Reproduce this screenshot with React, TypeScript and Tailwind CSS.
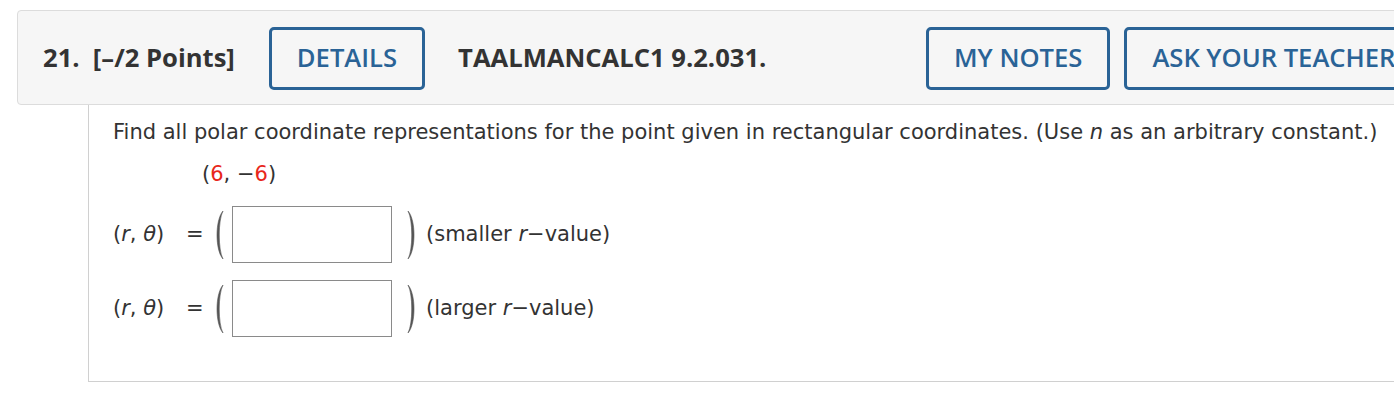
import React from "react";

const LParen = () => (
  <svg width="12" height="50" viewBox="0 0 12 50" className="shrink-0">
    <path d="M10 1 C2 10 2 40 10 49 C5 40 5 10 10 1 Z" fill="#555" stroke="#555" strokeWidth="0.6" />
  </svg>
);
const RParen = () => (
  <svg width="12" height="50" viewBox="0 0 12 50" className="shrink-0">
    <path d="M2 1 C10 10 10 40 2 49 C7 40 7 10 2 1 Z" fill="#555" stroke="#555" strokeWidth="0.6" />
  </svg>
);

const Row = ({ label }: { label: string }) => (
  <div className="flex items-center h-[57px]">
    <span className="w-[73px]">
      (<i>r</i>, <i>θ</i>)
    </span>
    <span className="w-[27px]">=</span>
    <LParen />
    <div className="ml-[7px] w-[160px] h-[57px] border border-[#8a8a8a] bg-white" />
    <div className="ml-[14px]">
      <RParen />
    </div>
    <span className="ml-[8px]">
      ({label} <i>r</i>−value)
    </span>
  </div>
);

export default function App() {
  return (
    <div className="w-full h-[408px] overflow-hidden bg-white">
      <div className="pt-[10px] pl-[17px] w-[1600px]">
        <div
          className="flex items-center h-[95px] border border-[#dcdcdc] rounded-l-[4px] bg-[#f6f6f6] pl-[25px] pt-[1px] text-[#333]"
          style={{ fontFamily: '"Open Sans", sans-serif' }}
        >
          <div className="flex items-center w-[883px] shrink-0">
            <span className="text-[25.6px] font-bold">21.&nbsp;&nbsp;[–/2 Points]</span>
            <button className="ml-[34px] h-[63px] px-[25px] border-[3px] border-[#2a6396] rounded-[5px] text-[#2a6396] text-[25.6px] font-semibold bg-transparent">
              DETAILS
            </button>
            <span className="ml-[33px] text-[25.6px] font-bold">TAALMANCALC1 9.2.031.</span>
          </div>
          <button className="h-[63px] px-[25px] border-[3px] border-[#2a6396] rounded-[5px] text-[#2a6396] text-[25.6px] font-semibold bg-transparent">
            MY NOTES
          </button>
          <button className="ml-[14px] h-[63px] px-[25px] border-[3px] border-[#2a6396] rounded-[5px] text-[#2a6396] text-[25.6px] font-semibold bg-transparent">
            ASK YOUR TEACHER
          </button>
        </div>
        <div
          className="ml-[71px] h-[277px] border-l border-b border-[#d0d0d0] pl-[24px] pt-[15px] text-[#333] text-[21px] leading-[25px]"
          style={{ fontFamily: '"DejaVu Sans", Verdana, sans-serif' }}
        >
          <p>
            Find all polar coordinate representations for the point given in rectangular coordinates. (Use <i>n</i> as an arbitrary constant.)
          </p>
          <p className="mt-[17px] ml-[89px]">
            (<span className="text-[#e8261b]">6</span>, −<span className="text-[#e8261b]">6</span>)
          </p>
          <div className="mt-[19px] flex flex-col gap-[17px]">
            <Row label="smaller" />
            <Row label="larger" />
          </div>
        </div>
      </div>
    </div>
  );
}
